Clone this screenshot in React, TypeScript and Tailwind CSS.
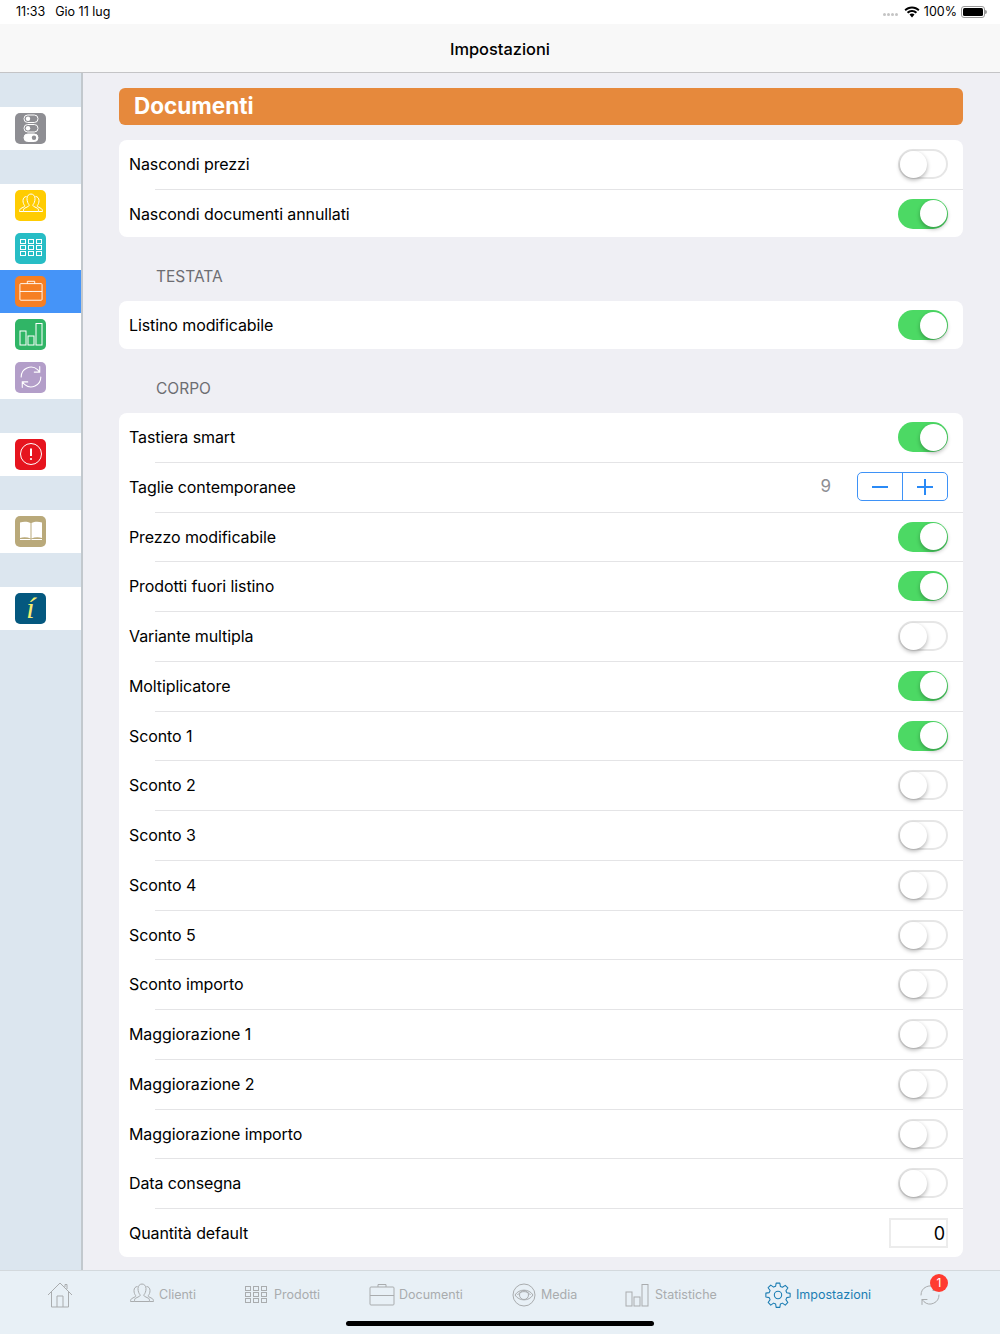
const font = "[font-family:Inter,'Liberation_Sans',sans-serif]";

const Toggle = ({ on }: { on: boolean }) => (
  <div
    className={`relative w-[50px] h-[30px] rounded-full ${
      on ? "bg-[#4cd964]" : "bg-white border-2 border-[#e6e6e6]"
    }`}
  >
    <div
      className={`absolute w-[27px] h-[27px] rounded-full bg-white shadow-[0_2px_4px_rgba(0,0,0,0.3)] ${
        on ? "top-[1.5px] right-[1.5px]" : "top-[0px] left-[0px]"
      }`}
    />
  </div>
);

const Stepper = () => (
  <div className="flex w-[91px] h-[29px] rounded-[5px] border-[1.5px] border-[#3e92f7]">
    <div className="flex-1 flex items-center justify-center border-r-[1.5px] border-[#3e92f7]">
      <div className="w-[16px] h-[2px] bg-[#2a8af6]" />
    </div>
    <div className="flex-1 flex items-center justify-center relative">
      <div className="w-[16px] h-[2px] bg-[#2a8af6]" />
      <div className="absolute w-[2px] h-[16px] bg-[#2a8af6]" />
    </div>
  </div>
);

type RowData = { label: string; on?: boolean; right?: "stepper" | "qty" };

const Row = ({ label, on, right, last }: RowData & { last: boolean }) => (
  <div className="relative h-[49.75px] shrink-0 flex items-center justify-between pl-[10px] pr-[15px] pb-[1.5px]">
    <span className="text-[16px] tracking-[-0.1px] text-black">{label}</span>
    {right === "stepper" ? (
      <div className="flex items-center gap-[26px]">
        <span className="text-[17px] text-[#8e8e93]">9</span>
        <Stepper />
      </div>
    ) : right === "qty" ? (
      <div className="w-[59px] h-[30px] border-2 border-[#ececec] flex items-center justify-end pr-[1px] text-[18px] text-black">
        0
      </div>
    ) : (
      <Toggle on={!!on} />
    )}
    {!last && <div className="absolute left-[36px] right-0 bottom-0 h-px bg-[#e4e4e6]" />}
  </div>
);

const Card = ({ rows, h }: { rows: RowData[]; h: string }) => (
  <div className={`bg-white rounded-[8px] flex flex-col ${h}`}>
    {rows.map((r, i) => (
      <Row key={r.label} {...r} last={i === rows.length - 1} />
    ))}
  </div>
);

const corpo: RowData[] = [
  { label: "Tastiera smart", on: true },
  { label: "Taglie contemporanee", right: "stepper" },
  { label: "Prezzo modificabile", on: true },
  { label: "Prodotti fuori listino", on: true },
  { label: "Variante multipla" },
  { label: "Moltiplicatore", on: true },
  { label: "Sconto 1", on: true },
  { label: "Sconto 2" },
  { label: "Sconto 3" },
  { label: "Sconto 4" },
  { label: "Sconto 5" },
  { label: "Sconto importo" },
  { label: "Maggiorazione 1" },
  { label: "Maggiorazione 2" },
  { label: "Maggiorazione importo" },
  { label: "Data consegna" },
  { label: "Quantità default", right: "qty" },
];

const Clients = ({ c = "currentColor", s = 26 }: { c?: string; s?: number }) => (
  <svg width={s} height={s} viewBox="0 0 26 26" fill="none" stroke={c} strokeWidth="1">
    <path d="M9 6.500c0-2.600 1.800-4.500 4-4.500s4 1.900 4 4.500c0 3-1 5-2 6.200-.4.600 0 1.400.7 1.700l4 2c.8.400.8 2.400.8 3.100H5.500c0-.7 0-2.700.8-3.100l4-2c.7-.3 1.100-1.100.7-1.700-1-1.200-2-3.200-2-6.200z" />
    <path d="M8.500 4.500C6.500 4.500 5 6.200 5 8.500c0 2.400.8 4 1.600 5 .4.500.1 1-.5 1.300l-3.400 1.800C2 17 1.500 18 1.500 19.500H5.500" />
    <path d="M17.500 4.500c2 0 3.500 1.700 3.500 4 0 2.400-.8 4-1.600 5-.4.500-.1 1 .5 1.300l3.400 1.800c.7.400 1.200 1.400 1.200 2.900H20.500" />
  </svg>
);

const Grid = ({ c = "currentColor" }: { c?: string }) => (
  <svg width="22" height="20" viewBox="0 0 22 20" fill="none" stroke={c} strokeWidth="1">
    {[1.5, 7.5, 13.5].flatMap((y) =>
      [0.5, 8.5, 16.5].map((x) => <rect key={`${x}-${y}`} x={x} y={y} width="5" height="4" />)
    )}
  </svg>
);

const Briefcase = ({ c = "currentColor", s = 26 }: { c?: string; s?: number }) => (
  <svg width={s} height={s} viewBox="0 0 26 26" fill="none" stroke={c} strokeWidth="1">
    <rect x="1" y="5" width="24" height="18" rx="1" />
    <path d="M1 13.500h24M9 5V2.500h8V5" />
    <circle cx="13" cy="13.500" r="0.6" fill={c} stroke="none" />
  </svg>
);

const Bars = ({ c = "currentColor", s = 24 }: { c?: string; s?: number }) => (
  <svg width={s} height={s} viewBox="0 0 24 24" fill="none" stroke={c} strokeWidth="1">
    <rect x="1" y="9" width="6" height="14" />
    <rect x="9" y="14" width="6" height="9" />
    <rect x="17" y="1.500" width="6" height="21.500" />
  </svg>
);

const Sync = ({ c = "currentColor", s = 22 }: { c?: string; s?: number }) => (
  <svg width={s} height={s} viewBox="0 0 22 22" fill="none" stroke={c} strokeWidth="1" strokeLinecap="round">
    <path d="M2 11a9 9 0 0 1 15-6.700L19 6.500M19 1.500v5h-5" />
    <path d="M20 11a9 9 0 0 1-15 6.700L3 15.500M3 20.500v-5h5" />
  </svg>
);

const Toggles = () => (
  <svg width="22" height="28" viewBox="0 0 22 28" fill="none" stroke="#fff" strokeWidth="1">
    <rect x="4" y="1" width="14" height="7.500" rx="3.700" />
    <circle cx="8" cy="4.700" r="2.200" fill="#fff" stroke="none" />
    <rect x="4" y="10.500" width="14" height="7.500" rx="3.700" />
    <circle cx="8" cy="14.200" r="2.200" fill="#fff" stroke="none" />
    <rect x="4" y="20" width="14" height="7.500" rx="3.700" fill="#fff" />
    <circle cx="14" cy="23.700" r="2.200" fill="#8e8e93" stroke="none" />
  </svg>
);

const Alert = () => (
  <svg width="24" height="24" viewBox="0 0 24 24" fill="none" stroke="#fff" strokeWidth="1">
    <circle cx="12" cy="12" r="10.500" />
    <path d="M12 6.500v7.500" strokeWidth="2" />
    <circle cx="12" cy="17" r="1.100" fill="#fff" stroke="none" />
  </svg>
);

const Book = () => (
  <svg width="24" height="22" viewBox="0 0 24 22" fill="#fff">
    <path d="M1 2.500c3.500-1 7.500-1 10.500.5v15.500c-3-1.300-7-1.500-10.500-.5z" />
    <path d="M12.500 3c3-1.500 7-1.500 10.500-.5v15.500c-3.500-1-7.500-.8-10.500.5z" />
    <path d="M1 19h10l1 1 1-1h10v1H1z" />
  </svg>
);

const Sidebar = () => {
  const Head = ({ h = "h-[34px]" }: { h?: string }) => <div className={`${h} bg-[#dce6ef]`} />;
  const Item = ({ bg, active, children }: { bg: string; active?: boolean; children: React.ReactNode }) => (
    <div className={`h-[43px] flex items-center pl-[15px] ${active ? "bg-[#4594f8]" : "bg-white"}`}>
      <div className={`w-[31px] h-[31px] rounded-[5px] flex items-center justify-center ${bg}`}>{children}</div>
    </div>
  );
  return (
    <div className="w-[83px] shrink-0 bg-[#dce6ef] border-r-2 border-[#c2c8cd]">
      <Head h="h-[33.600px]" />
      <Item bg="bg-[#8e8e93]"><Toggles /></Item>
      <Head />
      <Item bg="bg-[#ffcc02]"><Clients c="#fff" /></Item>
      <Item bg="bg-[#27bdc5]"><Grid c="#fff" /></Item>
      <Item bg="bg-[#f67f23]" active><Briefcase c="#fff" s={24} /></Item>
      <Item bg="bg-[#30b566]"><Bars c="#fff" /></Item>
      <Item bg="bg-[#b39ec9]"><Sync c="#fff" s={24} /></Item>
      <Head />
      <Item bg="bg-[#e6141e]"><Alert /></Item>
      <Head />
      <Item bg="bg-[#b9a97a]"><Book /></Item>
      <Head />
      <Item bg="bg-[#04587f]">
        <span className="text-[#f5ee70] text-[30px] italic leading-none [font-family:'Liberation_Serif',serif]">í</span>
      </Item>
    </div>
  );
};

const Home = () => (
  <svg width="26" height="26" viewBox="0 0 26 26" fill="none" stroke="#a9acae" strokeWidth="1">
    <path d="M1 13 13 1l12 12M4.500 10v15h17V10M10 25v-11h6v11M18 5V2.500h2V7" />
  </svg>
);

const Media = () => (
  <svg width="24" height="24" viewBox="0 0 24 24" fill="none" stroke="#a9acae" strokeWidth="1">
    <circle cx="12" cy="12" r="11" />
    <path d="M3 12c4-6.500 14-6.500 18 0-4 6.500-14 6.500-18 0z" />
    <circle cx="12" cy="12" r="4.500" />
    <path d="M5.500 12c3-4.500 10-4.500 13 0" />
  </svg>
);

const Gear = () => (
  <svg width="26" height="26" viewBox="0 0 24 24" fill="none" stroke="#1b7db3" strokeWidth="1" strokeLinejoin="round">
    <circle cx="12" cy="12" r="3.400" />
    <path d="M10.300 1h3.400l.5 3.100 1.900.8 2.600-1.800 2.400 2.400-1.800 2.600.8 1.900 3.100.5v3.400l-3.100.5-.8 1.900 1.800 2.600-2.400 2.400-2.600-1.800-1.900.8-.5 3.100h-3.400l-.5-3.100-1.900-.8-2.600 1.800-2.400-2.400 1.800-2.600-.8-1.900-3.100-.5V10.300l3.100-.5.8-1.900-1.800-2.600 2.400-2.400 2.600 1.800 1.900-.8z" />
  </svg>
);

const Tab = ({ w, icon, label, active, gap = "gap-[5px]" }: { w: string; icon: React.ReactNode; label?: string; active?: boolean; gap?: string }) => (
  <div className={`flex items-center ${gap} ${w} ${active ? "text-[#1b7db3]" : "text-[#a9acae]"}`}>
    {icon}
    {label && <span className="text-[12.500px] mt-[1px]">{label}</span>}
  </div>
);

const TabBar = () => (
  <div className="relative h-[64px] shrink-0 bg-[#e8f0f6] border-t-[1.500px] border-[#d3d9dd]">
    <div className="flex items-center pl-[47px] h-[48px]">
      <Tab w="w-[82px]" icon={<Home />} />
      <Tab w="w-[116px]" icon={<Clients />} label="Clienti" gap="gap-[4px]" />
      <Tab w="w-[124px]" icon={<Grid />} label="Prodotti" gap="gap-[7px]" />
      <Tab w="w-[143px]" icon={<Briefcase />} label="Documenti" gap="gap-[4px]" />
      <Tab w="w-[113px]" icon={<Media />} label="Media" />
      <Tab w="w-[140px]" icon={<Bars />} label="Statistiche" gap="gap-[6px]" />
      <Tab w="w-[154px]" icon={<Gear />} label="Impostazioni" active />
      <Tab w="w-[24px]" icon={<Sync />} />
    </div>
    <div className="absolute left-[930px] top-[3px] w-[18px] h-[18px] rounded-full bg-[#ff3b30] text-white text-[12px] flex items-center justify-center">
      1
    </div>
    <div className="absolute left-[346px] bottom-[8px] w-[308px] h-[5px] rounded-full bg-black" />
  </div>
);

const StatusBar = () => (
  <div className="h-[24px] shrink-0 bg-white flex items-center justify-between pl-[16px] pr-[15px] text-[12.500px] text-black">
    <div className="flex gap-[10px]">
      <span>11:33</span>
      <span>Gio 11 lug</span>
    </div>
    <div className="flex items-center gap-[4px]">
      <div className="flex gap-[1px] mr-[2px] mt-[5px]">
        {[0, 1, 2, 3].map((i) => (
          <div key={i} className="w-[3px] h-[3px] rounded-full bg-[#c4c4c4]" />
        ))}
      </div>
      <svg width="16" height="12" viewBox="0 0 16 12" fill="#000">
        <path d="M8 2.500c2.500 0 4.600 1 6.200 2.500l1.300-1.400C13.500 1.700 10.900.5 8 .5S2.500 1.700.5 3.600L1.800 5C3.400 3.500 5.500 2.500 8 2.500z" />
        <path d="M8 6c1.500 0 2.800.6 3.800 1.500l1.300-1.400C11.700 4.800 10 4 8 4s-3.700.8-5.100 2.100l1.300 1.400C5.200 6.600 6.500 6 8 6z" />
        <path d="M8 7.500c-1 0-1.800.4-2.500 1L8 11.500l2.500-3c-.7-.6-1.500-1-2.500-1z" />
      </svg>
      <span>100%</span>
      <div className="relative w-[24px] h-[12px] rounded-[3px] border border-[#9a9a9a] p-[1px]">
        <div className="w-full h-full rounded-[1.500px] bg-black" />
        <div className="absolute -right-[3px] top-[3px] w-[2px] h-[4px] rounded-r-sm bg-[#9a9a9a]" />
      </div>
    </div>
  </div>
);

const SectionLabel = ({ text, h }: { text: string; h: string }) => (
  <div className={`flex items-end pl-[37px] pb-[13px] text-[15.500px] text-[#6d6d72] ${h}`}>{text}</div>
);

export default function App() {
  return (
    <div className={`w-[1000px] h-[1334px] flex flex-col overflow-hidden ${font}`}>
      <StatusBar />
      <div className="h-[49px] shrink-0 bg-[#f8f8f8] border-b border-[#c4c4c6] flex items-center justify-center pt-[2px] text-[16.400px] font-medium text-black">
        Impostazioni
      </div>
      <div className="flex-1 flex min-h-0">
        <Sidebar />
        <div className="flex-1 bg-[#efeff4] pl-[36px] pr-[37px] pt-[15px]">
          <div className="h-[37px] rounded-[6px] bg-[#e6893c] flex items-center pl-[15px] pb-[1px] text-[22.500px] font-bold text-white">
            Documenti
          </div>
          <div className="h-[15px]" />
          <Card h="h-[97px]" rows={[{ label: "Nascondi prezzi" }, { label: "Nascondi documenti annullati", on: true }]} />
          <SectionLabel text="TESTATA" h="h-[64px]" />
          <Card h="h-[48px]" rows={[{ label: "Listino modificabile", on: true }]} />
          <SectionLabel text="CORPO" h="h-[64px]" />
          <Card h="h-[844px]" rows={corpo} />
        </div>
      </div>
      <TabBar />
    </div>
  );
}
